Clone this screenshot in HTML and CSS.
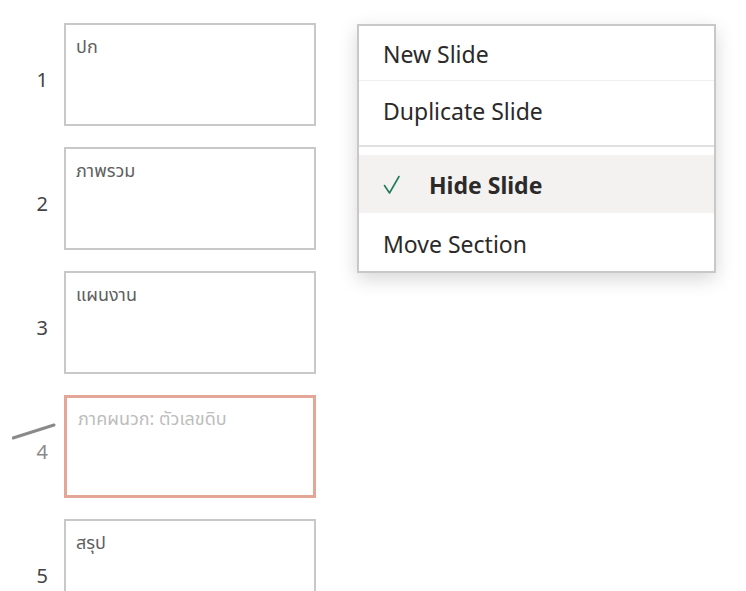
FILE: index.html
```html
<!DOCTYPE html>
<html lang="th">
<head>
<meta charset="utf-8">
<title>Slides</title>
<link rel="stylesheet" href="styles.css">
</head>
<body>
<div class="panel">
  <div class="row">
    <div class="num">1</div>
    <div class="thumb"><span class="title">ปก</span></div>
  </div>
  <div class="row">
    <div class="num">2</div>
    <div class="thumb"><span class="title">ภาพรวม</span></div>
  </div>
  <div class="row">
    <div class="num">3</div>
    <div class="thumb"><span class="title">แผนงาน</span></div>
  </div>
  <div class="row hidden">
    <svg class="slash" width="48" height="20" viewBox="0 0 48 20"><line x1="1" y1="16" x2="42" y2="3" stroke="#8a8a8a" stroke-width="3" stroke-linecap="round"/></svg>
    <div class="num">4</div>
    <div class="thumb"><span class="title">ภาคผนวก: ตัวเลขดิบ</span></div>
  </div>
  <div class="row">
    <div class="num">5</div>
    <div class="thumb"><span class="title">สรุป</span></div>
  </div>
</div>

<div class="menu">
  <div class="item first">New Slide</div>
  <div class="item">Duplicate Slide</div>
  <div class="divider"></div>
  <div class="item active">
    <svg class="check" width="18" height="20" viewBox="0 0 18 20"><polyline points="1.5,10.5 6.5,18 16,1.5" fill="none" stroke="#1f7a5c" stroke-width="1.6" stroke-linejoin="round" stroke-linecap="round"/></svg>
    <span class="bold">Hide Slide</span>
  </div>
  <div class="item last">Move Section</div>
</div>
</body>
</html>
```
FILE: styles.css
```css
html, body {
  margin: 0;
  padding: 0;
  background: #ffffff;
  overflow: hidden;
}
body {
  width: 746px;
  height: 591px;
  position: relative;
  font-family: "Noto Sans", "Noto Sans Thai", "Open Sans", "DejaVu Sans", sans-serif;
}
.panel {
  display: flex;
  flex-direction: column;
  gap: 21px;
  padding-top: 23px;
}
.row {
  display: flex;
  align-items: center;
  position: relative;
}
.num {
  width: 48px;
  margin-right: 16px;
  text-align: right;
  font-size: 20px;
  color: #444444;
  padding-top: 10px;
  line-height: 24px;
}
.thumb {
  box-sizing: border-box;
  width: 252px;
  height: 103px;
  border: 2px solid #c8c8c8;
  padding: 9px 10px;
}
.title {
  font-size: 18px;
  line-height: 24px;
  color: #5f5f5f;
}
.hidden .num {
  color: #8a8a8a;
}
.hidden .thumb {
  border: 3px solid #e4a797;
  padding: 8px 9px 8px 11px;
}
.hidden .title {
  color: #bdbdbd;
}
.slash {
  position: absolute;
  left: 12px;
  top: 27px;
}
.menu {
  position: absolute;
  left: 357px;
  top: 24px;
  width: 359px;
  height: 249px;
  box-sizing: border-box;
  border: 2px solid #c8c8c8;
  background: #ffffff;
  box-shadow: 0 6px 18px rgba(0, 0, 0, 0.16);
  display: flex;
  flex-direction: column;
}
.item {
  display: flex;
  align-items: center;
  box-sizing: border-box;
  height: 58px;
  padding-left: 24px;
  padding-top: 2px;
  font-size: 23px;
  color: #2b2a29;
}
.item.first {
  height: 55px;
  border-bottom: 1px solid #f0f0f0;
}
.item.last {
  height: 57px;
  padding-top: 5px;
}
.divider {
  height: 2px;
  background: #e1e1e1;
  margin: 6px 0 8px;
}
.item.active {
  background: #f3f2f1;
}
.check {
  margin-right: 28px;
}
.bold {
  font-weight: 700;
}
```
